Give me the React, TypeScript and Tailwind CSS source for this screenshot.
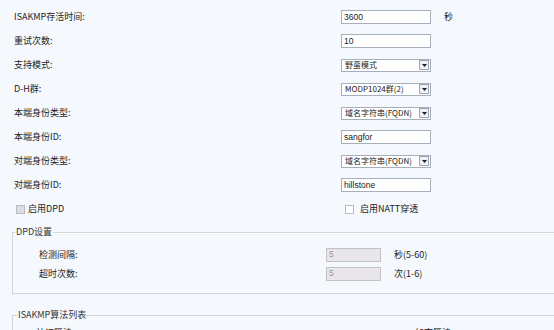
const cn = "font-['Noto_Sans_CJK_SC',sans-serif]";
const sans = "font-['Liberation_Sans','Noto_Sans_CJK_SC',sans-serif]";

function TextBox({ value }: { value: string }) {
  return (
    <div className={`flex h-[14px] w-[90px] items-center border border-[#a7b0ba] bg-white pl-[2px] text-[8.5px] text-[#222] ${sans}`}>
      {value}
    </div>
  );
}

function DisabledBox({ value }: { value: string }) {
  return (
    <div className={`flex h-[14px] w-[55px] items-center border border-[#c2c2c6] bg-[#e8e6ea] pl-[2px] text-[8.5px] text-[#9a9a9a] ${sans}`}>
      {value}
    </div>
  );
}

function Select({ value }: { value: string }) {
  return (
    <div className="flex h-[13px] w-[90px] items-center border border-[#a7b0ba] bg-white">
      <span className={`flex-1 pl-[3px] text-[8px] leading-none text-[#222] ${cn}`}>{value}</span>
      <span className="mr-px flex h-[10px] w-[10px] items-center justify-center border border-[#9ba4ae] bg-[#eef0f2]">
        <svg width="5" height="3" viewBox="0 0 5 3">
          <path d="M0 0H5L2.5 3Z" fill="#222" />
        </svg>
      </span>
    </div>
  );
}

function Row({ label, children }: { label: string; children: React.ReactNode }) {
  return (
    <div className="flex h-6 items-center">
      <div className={`w-[341px] pl-[14px] text-[9px] text-[#222] ${cn}`}>{label}</div>
      {children}
    </div>
  );
}

function Checkbox({ filled }: { filled?: boolean }) {
  return (
    <span
      className={
        filled
          ? 'inline-block h-[9px] w-[9px] border border-[#b8bcc2] bg-[#dcdde0]'
          : 'inline-block h-[9px] w-[9px] border border-[#b8bcc2] bg-white'
      }
    />
  );
}

export default function App() {
  return (
    <div className={`h-[330px] w-[554px] overflow-hidden bg-[#f5f9fd] pt-[5px] ${cn}`}>
      <Row label="ISAKMP存活时间:">
        <TextBox value="3600" />
        <span className="ml-[13px] text-[9px] text-[#222]">秒</span>
      </Row>
      <Row label="重试次数:">
        <TextBox value="10" />
      </Row>
      <Row label="支持模式:">
        <Select value="野蛮模式" />
      </Row>
      <Row label="D-H群:">
        <Select value="MODP1024群(2)" />
      </Row>
      <Row label="本端身份类型:">
        <Select value="域名字符串(FQDN)" />
      </Row>
      <Row label="本端身份ID:">
        <TextBox value="sangfor" />
      </Row>
      <Row label="对端身份类型:">
        <Select value="域名字符串(FQDN)" />
      </Row>
      <Row label="对端身份ID:">
        <TextBox value="hillstone" />
      </Row>
      <div className="flex h-6 items-center text-[9px] text-[#222]">
        <div className="flex w-[341px] items-center gap-[3px] pl-[16px]">
          <Checkbox filled />
          <span>启用DPD</span>
        </div>
        <div className="ml-[4px] flex items-center gap-[6px]">
          <Checkbox />
          <span>启用NATT穿透</span>
        </div>
      </div>

      <fieldset className="mt-[5px] ml-3 w-[560px] border border-[#d2d6db] pb-[10px] shadow-[inset_0_1px_0_#fff]">
        <legend className="ml-[2px] px-px text-[9px] leading-[12px] text-[#333]">DPD设置</legend>
        <div className="pt-[7px] text-[9px] text-[#222]">
          <div className="flex h-[19px] items-center">
            <div className="w-[313px] pl-[26px]">检测间隔:</div>
            <DisabledBox value="5" />
            <span className="ml-[13px]">秒(5-60)</span>
          </div>
          <div className="flex h-[19px] items-center">
            <div className="w-[313px] pl-[26px]">超时次数:</div>
            <DisabledBox value="5" />
            <span className="ml-[13px]">次(1-6)</span>
          </div>
        </div>
      </fieldset>

      <fieldset className="mt-[15px] ml-3 w-[560px] border border-[#d2d6db] pb-[10px]">
        <legend className="ml-[4px] px-px text-[9px] leading-[12px] text-[#333]">ISAKMP算法列表</legend>
        <div className="flex pt-[5px] text-[9px] text-[#222]">
          <div className="w-[402px] pl-[23px]">认证算法</div>
          <div>加密算法</div>
        </div>
      </fieldset>
    </div>
  );
}
